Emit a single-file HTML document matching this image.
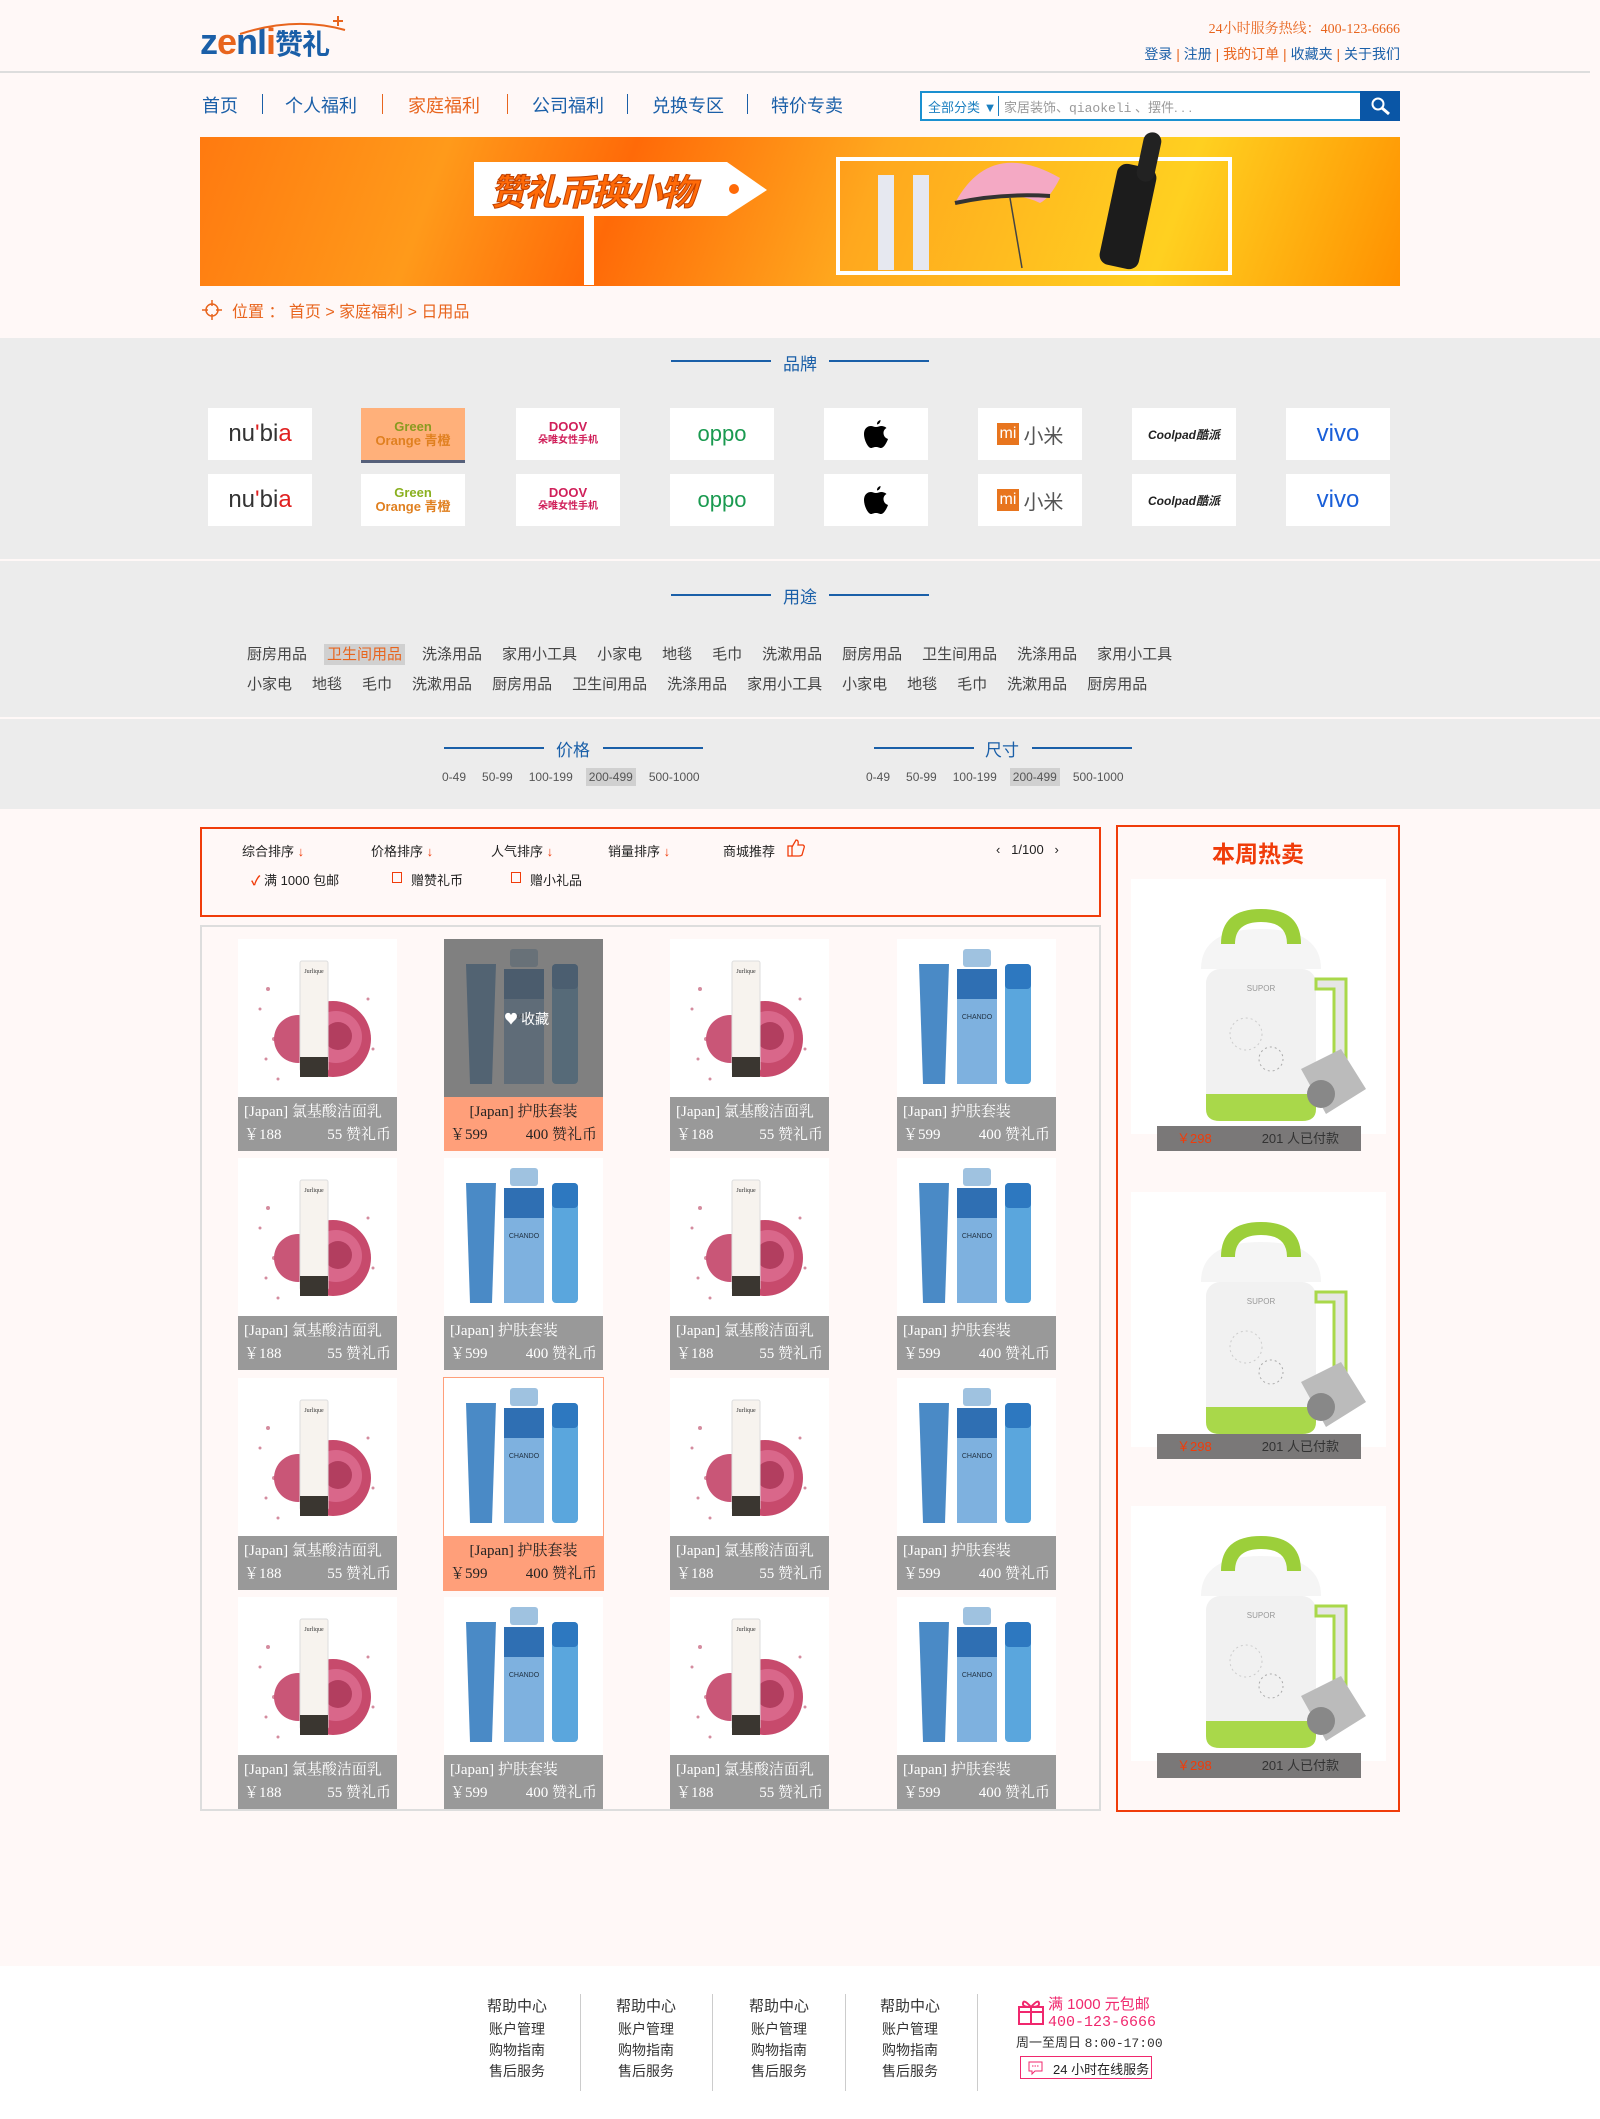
<!DOCTYPE html>
<html><head><meta charset="utf-8">
<style>
*{margin:0;padding:0;box-sizing:border-box}
body{width:1600px;height:2119px;background:#fff8f7;font-family:"Liberation Sans","Noto Sans CJK SC",sans-serif;position:relative;overflow:hidden;color:#333}
.a{position:absolute}
.nav span{position:absolute;top:92px;font-size:18px;color:#1a5fa8}
.sep{position:absolute;top:94px;width:1px;height:20px}
.sec{position:absolute;left:0;width:1600px;background:#ececec}
.ttl{position:absolute;font-size:17px;color:#1a5fa8;text-align:center;width:60px}
.ln{position:absolute;height:2px;background:#1a5fa8;width:100px}
.logo{position:absolute;width:104px;height:52px;background:#fff;display:flex;align-items:center;justify-content:center;font-weight:bold}
.use{position:absolute;font-size:15px;color:#444;white-space:nowrap}
.use i{font-style:normal;margin-right:20px}
.pr{position:absolute;font-size:12px;color:#555;white-space:nowrap}
.pr i{font-style:normal;margin:0 5px;padding:2px 3px}
.card{position:absolute;width:159px;height:212px;background:#fff}
.card svg{position:absolute;left:0;top:0}
.cap{position:absolute;left:0;top:158px;width:159px;height:54px;background:#999;color:#fff;font-family:"Liberation Serif","Noto Serif CJK SC",serif;font-size:15px;padding:4px 6px;line-height:23px}
.cap b{font-weight:normal;display:flex;justify-content:space-between}
.hot .cap{background:#ff9f7a;color:#222;text-align:center}
.side{position:absolute;left:1131px;width:255px;height:255px;background:#fff}
.bar{position:absolute;left:1157px;width:204px;height:25px;background:#7a7878;font-size:13px;color:#333;line-height:25px}
.fc{position:absolute;top:1996px;width:90px;text-align:center;font-size:14px;color:#333;line-height:21px}
.fc div:first-child{font-size:15px;margin-bottom:2px}
.fd{position:absolute;top:1994px;width:1px;height:97px;background:#ccc}
</style></head><body>
<svg width="0" height="0" style="position:absolute">
<defs>
<symbol id="rose" viewBox="0 0 159 158">
<rect width="159" height="158" fill="#fff"/>
<g fill="#b8405f" opacity=".6"><circle cx="30" cy="50" r="2"/><circle cx="22" cy="70" r="1.5"/><circle cx="36" cy="100" r="2"/><circle cx="28" cy="120" r="1.5"/><circle cx="130" cy="60" r="1.5"/><circle cx="135" cy="110" r="1.5"/><circle cx="40" cy="140" r="1.5"/></g>
<circle cx="95" cy="100" r="38" fill="#c74a6c"/><circle cx="98" cy="98" r="26" fill="#d9678a"/><circle cx="100" cy="97" r="14" fill="#b23e5f"/><circle cx="60" cy="100" r="24" fill="#c95677"/>
<rect x="62" y="22" width="28" height="110" rx="2" fill="#f7f3ee" stroke="#ddd"/><rect x="62" y="118" width="28" height="20" fill="#3a3630"/>
<text x="76" y="34" font-size="6" text-anchor="middle" fill="#333" font-family="Liberation Serif">Jurlique</text>
</symbol>
<symbol id="blue" viewBox="0 0 159 158">
<rect width="159" height="158" fill="#fff"/>
<path d="M22 25 h30 l-4 120 h-22z" fill="#4a8ac6"/>
<rect x="66" y="10" width="28" height="18" rx="3" fill="#9fc2e0"/>
<path d="M60 30 h40 v115 h-40z" fill="#7eb1df"/><rect x="60" y="30" width="40" height="30" fill="#2f6fb3"/>
<rect x="108" y="25" width="26" height="120" rx="4" fill="#5aa6dd"/><rect x="108" y="25" width="26" height="25" rx="4" fill="#2d78c0"/>
<text x="80" y="80" font-size="7" text-anchor="middle" fill="#234">CHANDO</text>
</symbol>
<symbol id="supor" viewBox="0 0 255 255">
<rect width="255" height="255" fill="#fff"/>
<rect x="75" y="90" width="110" height="150" rx="14" fill="#f1f1f1"/>
<path d="M75 215 h110 v15 q0 12 -14 12 h-82 q-14 0 -14 -12z" fill="#a9d84a"/>
<path d="M70 90 q0 -40 60 -40 q60 0 60 40z" fill="#f5f5f5"/>
<path d="M90 65 q0 -35 40 -35 q40 0 40 35 h-14 q0 -22 -26 -22 q-26 0 -26 22z" fill="#9ccf3a"/>
<path d="M185 100 h30 v110 h-20 v-10 h8 v-90 h-18z" fill="#e6e6e6" stroke="#a9d84a" stroke-width="3"/>
<path d="M170 190 l40 -20 l25 40 l-40 25z" fill="#bbb"/><circle cx="190" cy="215" r="14" fill="#888"/>
<text x="130" y="112" font-size="8" text-anchor="middle" fill="#999" font-family="Liberation Sans">SUPOR</text>
<circle cx="115" cy="155" r="16" fill="none" stroke="#ccc" stroke-dasharray="2 3"/><circle cx="140" cy="180" r="12" fill="none" stroke="#aaa" stroke-dasharray="2 3"/>
</symbol>
<symbol id="apple" viewBox="0 0 24 28">
<path d="M16.5 0 C16.7 2 15.2 4.2 13 4.5 C12.7 2.5 14.3 0.4 16.5 0z"/>
<path d="M12 7 C10 7 8.5 6 7 6 C3 6 0 9 0 14 C0 20 4 28 7 28 C8.5 28 9.5 27 12 27 C14.5 27 15.3 28 17 28 C20 28 23 22 24 19 C21 18 19.5 15.5 19.5 13 C19.5 10.5 21 8.8 22.5 8 C21 6.5 19 6 17.5 6 C15.5 6 14 7 12 7z"/>
</symbol>
</defs></svg>

<!-- header -->
<div class="a" style="left:200px;top:22px;font-size:36px;font-weight:bold;letter-spacing:-1px;line-height:40px"><span style="color:#1a5fa8">z</span><span style="color:#e8651e">e</span><span style="color:#1a5fa8">nl</span><span style="color:#e8651e">i</span><span style="color:#1a5fa8;font-size:28px">赞礼</span></div>
<svg class="a" style="left:235px;top:16px" width="120" height="20"><path d="M5 18 Q60 0 110 14" stroke="#e8651e" stroke-width="2" fill="none"/><path d="M103 0 v10 M98 5 h10" stroke="#e8651e" stroke-width="2"/></svg>
<div class="a" style="left:1150px;top:18px;width:250px;text-align:right;font-size:14px;color:#e8651e;font-family:'Liberation Serif','Noto Serif CJK SC',serif">24小时服务热线：400-123-6666</div>
<div class="a" style="left:1050px;top:44px;width:350px;text-align:right;font-size:14px;color:#1a5fa8">登录 <span style="color:#e8651e">|</span> 注册 <span style="color:#e8651e">|</span> <span style="color:#e8651e">我的订单</span> <span style="color:#e8651e">|</span> 收藏夹 <span style="color:#e8651e">|</span> 关于我们</div>
<div class="a" style="left:0;top:71px;width:1590px;height:2px;background:#ddd"></div>

<div class="nav">
<span style="left:202px">首页</span><div class="sep" style="left:262px;background:#1a5fa8"></div>
<span style="left:285px">个人福利</span><div class="sep" style="left:382px;background:#e8651e"></div>
<span style="left:408px;color:#e8651e">家庭福利</span><div class="sep" style="left:507px;background:#e8651e"></div>
<span style="left:532px">公司福利</span><div class="sep" style="left:627px;background:#1a5fa8"></div>
<span style="left:652px">兑换专区</span><div class="sep" style="left:747px;background:#1a5fa8"></div>
<span style="left:771px">特价专卖</span>
</div>
<div class="a" style="left:920px;top:91px;width:480px;height:30px;border:2px solid #1a90d0;background:#fff"></div>
<div class="a" style="left:928px;top:97px;font-size:13px;color:#1a7fc0">全部分类 ▼</div>
<div class="a" style="left:998px;top:96px;width:1px;height:20px;background:#1a7fc0"></div>
<div class="a" style="left:1004px;top:97px;font-size:13px;color:#999">家居装饰、<span style="font-family:'Liberation Mono'">qiaokeli</span> 、摆件. . .</div>
<div class="a" style="left:1360px;top:91px;width:40px;height:30px;background:#0a56a6"></div>
<svg class="a" style="left:1370px;top:96px" width="22" height="20"><circle cx="8" cy="8" r="5.5" stroke="#fff" stroke-width="2" fill="none"/><path d="M12 12 l7 6" stroke="#fff" stroke-width="3"/></svg>

<!-- banner -->
<div class="a" style="left:200px;top:137px;width:1200px;height:149px;background:linear-gradient(110deg,#ff7a10 0%,#ff9a1a 20%,#ff6a08 35%,#ffa81e 55%,#ffd020 80%,#ff9000 100%)"></div>
<div class="a" style="left:584px;top:210px;width:10px;height:75px;background:#fff"></div>
<svg class="a" style="left:472px;top:160px" width="300" height="58"><path d="M2 2 H255 L295 30 L255 56 H2z" fill="#fff"/><circle cx="262" cy="29" r="5" fill="#ff6a08"/></svg>
<div class="a" style="left:490px;top:164px;font-size:36px;font-weight:bold;color:#ff6a08;font-style:italic;letter-spacing:-2px;-webkit-text-stroke:1px #c04000">赞礼币换小物</div>
<div class="a" style="left:836px;top:157px;width:396px;height:118px;border:4px solid #fff"></div>
<div class="a" style="left:878px;top:175px;width:16px;height:95px;background:#e6e8f0"></div>
<div class="a" style="left:913px;top:175px;width:16px;height:95px;background:#e6e8f0"></div>
<svg class="a" style="left:950px;top:138px" width="120" height="140"><path d="M5 65 Q40 0 110 40 Q100 60 90 65 Q60 50 5 65z" fill="#f4a9c4"/><path d="M5 65 Q50 55 100 58" stroke="#333" stroke-width="4" fill="none"/><path d="M60 60 L72 130" stroke="#444" stroke-width="1.5"/></svg>
<div class="a" style="left:1108px;top:165px;width:40px;height:103px;background:#1c1c1c;border-radius:10px;transform:rotate(12deg)"></div>
<div class="a" style="left:1140px;top:132px;width:18px;height:50px;background:#222;border-radius:9px;transform:rotate(12deg)"></div>

<!-- breadcrumb -->
<svg class="a" style="left:202px;top:299px" width="20" height="22"><circle cx="10" cy="11" r="6" stroke="#e8651e" stroke-width="1.5" fill="none"/><path d="M10 1v6M10 15v6M0 11h6M14 11h6" stroke="#e8651e" stroke-width="1.5"/></svg>
<div class="a" style="left:232px;top:298px;font-size:16px;color:#e8651e">位置 ： 首页 &gt; 家庭福利 &gt; 日用品</div>

<!-- brand -->
<div class="sec" style="top:338px;height:221px"></div>
<div class="ln" style="left:671px;top:360px"></div><div class="ttl" style="left:770px;top:350px">品牌</div><div class="ln" style="left:829px;top:360px"></div>
<div class="logo" style="left:208px;top:408px;color:#333;font-size:24px;font-weight:normal">nu<span style="color:#e02020">'</span>bi<span style="color:#e02020">a</span></div>
<div class="logo" style="left:361px;top:408px;background:#ffb07a;box-shadow:0 3px 0 #56607a;color:#8a9a20;font-size:13px;line-height:14px;flex-direction:column">Green<br><span style="color:#e08020">Orange 青橙</span></div>
<div class="logo" style="left:516px;top:408px;color:#d0205a;font-size:13px;flex-direction:column;line-height:14px">DOOV<span style="font-size:10px">朵唯女性手机</span></div>
<div class="logo" style="left:670px;top:408px;color:#1a9a50;font-size:22px;font-weight:normal">oppo</div>
<div class="logo" style="left:824px;top:408px"><svg width="24" height="28"><use href="#apple"/></svg></div>
<div class="logo" style="left:978px;top:408px;color:#555;font-size:20px;font-weight:normal"><span style="background:#e8751e;color:#fff;font-size:16px;padding:2px 3px;margin-right:4px">mi</span>小米</div>
<div class="logo" style="left:1132px;top:408px;font-size:12px;font-style:italic;color:#222">Coolpad酷派</div>
<div class="logo" style="left:1286px;top:408px;color:#1a5fd8;font-size:24px;font-weight:normal">vivo</div>
<div class="logo" style="left:208px;top:474px;color:#333;font-size:24px;font-weight:normal">nu<span style="color:#e02020">'</span>bi<span style="color:#e02020">a</span></div>
<div class="logo" style="left:361px;top:474px;color:#8ab020;font-size:13px;line-height:14px;flex-direction:column">Green<br><span style="color:#e08020">Orange 青橙</span></div>
<div class="logo" style="left:516px;top:474px;color:#d0205a;font-size:13px;flex-direction:column;line-height:14px">DOOV<span style="font-size:10px">朵唯女性手机</span></div>
<div class="logo" style="left:670px;top:474px;color:#1a9a50;font-size:22px;font-weight:normal">oppo</div>
<div class="logo" style="left:824px;top:474px"><svg width="24" height="28"><use href="#apple"/></svg></div>
<div class="logo" style="left:978px;top:474px;color:#555;font-size:20px;font-weight:normal"><span style="background:#e8751e;color:#fff;font-size:16px;padding:2px 3px;margin-right:4px">mi</span>小米</div>
<div class="logo" style="left:1132px;top:474px;font-size:12px;font-style:italic;color:#222">Coolpad酷派</div>
<div class="logo" style="left:1286px;top:474px;color:#1a5fd8;font-size:24px;font-weight:normal">vivo</div>

<!-- usage -->
<div class="sec" style="top:561px;height:156px"></div>
<div class="ln" style="left:671px;top:594px"></div><div class="ttl" style="left:770px;top:583px">用途</div><div class="ln" style="left:829px;top:594px"></div>
<div class="use" style="left:247px;top:643px"><i>厨房用品</i><i style="background:#d0d0d0;color:#e8651e;padding:2px 3px;margin-left:-3px;margin-right:17px">卫生间用品</i><i>洗涤用品</i><i>家用小工具</i><i>小家电</i><i>地毯</i><i>毛巾</i><i>洗漱用品</i><i>厨房用品</i><i>卫生间用品</i><i>洗涤用品</i><i>家用小工具</i></div>
<div class="use" style="left:247px;top:673px"><i>小家电</i><i>地毯</i><i>毛巾</i><i>洗漱用品</i><i>厨房用品</i><i>卫生间用品</i><i>洗涤用品</i><i>家用小工具</i><i>小家电</i><i>地毯</i><i>毛巾</i><i>洗漱用品</i><i>厨房用品</i></div>

<!-- price -->
<div class="sec" style="top:719px;height:90px"></div>
<div class="ln" style="left:444px;top:747px"></div><div class="ttl" style="left:543px;top:736px">价格</div><div class="ln" style="left:603px;top:747px"></div>
<div class="ln" style="left:874px;top:747px"></div><div class="ttl" style="left:972px;top:736px">尺寸</div><div class="ln" style="left:1032px;top:747px"></div>
<div class="pr" style="left:434px;top:770px"><i>0-49</i><i>50-99</i><i>100-199</i><i style="background:#d0d0d0">200-499</i><i>500-1000</i></div>
<div class="pr" style="left:858px;top:770px"><i>0-49</i><i>50-99</i><i>100-199</i><i style="background:#d0d0d0">200-499</i><i>500-1000</i></div>

<!-- filter -->
<div class="a" style="left:200px;top:827px;width:901px;height:90px;border:2px solid #f03c0a"></div>
<div class="a" style="left:242px;top:841px;font-size:13px;color:#222;white-space:nowrap">综合排序 <span style="color:#f03c0a">↓</span></div>
<div class="a" style="left:371px;top:841px;font-size:13px;color:#222">价格排序 <span style="color:#f03c0a">↓</span></div>
<div class="a" style="left:491px;top:841px;font-size:13px;color:#222">人气排序 <span style="color:#f03c0a">↓</span></div>
<div class="a" style="left:608px;top:841px;font-size:13px;color:#222">销量排序 <span style="color:#f03c0a">↓</span></div>
<div class="a" style="left:723px;top:841px;font-size:13px;color:#222">商城推荐</div>
<svg class="a" style="left:786px;top:838px" width="20" height="20"><path d="M2 8h4v10H2z M6 9 L10 2 Q13 2 12 7 H17 Q19 8 18 10 L16 17 Q15 18 13 18 H6" fill="none" stroke="#f03c0a" stroke-width="1.3"/></svg>
<div class="a" style="left:996px;top:842px;font-size:13px;color:#222">‹ &nbsp; 1/100 &nbsp; ›</div>
<div class="a" style="left:251px;top:870px;font-size:13px;color:#222"><span style="color:#f03c0a;font-weight:bold">✓</span> 满 1000 包邮</div>
<div class="a" style="left:392px;top:872px;width:10px;height:11px;border:1px solid #f03c0a"></div><div class="a" style="left:411px;top:870px;font-size:13px;color:#222">赠赞礼币</div>
<div class="a" style="left:511px;top:872px;width:10px;height:11px;border:1px solid #f03c0a"></div><div class="a" style="left:530px;top:870px;font-size:13px;color:#222">赠小礼品</div>

<!-- products -->
<div class="a" style="left:200px;top:925px;width:901px;height:886px;border:2px solid #ddd"></div>

<div class="card" style="left:238px;top:939px"><svg width="159" height="158"><use href="#rose"/></svg><div class="cap">[Japan] 氯基酸洁面乳<b><span>￥188</span><span>55 赞礼币</span></b></div></div>
<div class="card hot" style="left:444px;top:939px"><svg width="159" height="158"><use href="#blue"/><rect width="159" height="158" fill="#555" opacity=".75"/><text x="60" y="85" fill="#fff" font-size="14" font-family="Noto Sans CJK SC">♥ 收藏</text></svg><div class="cap">[Japan] 护肤套装<b><span>￥599</span><span>400 赞礼币</span></b></div></div>
<div class="card" style="left:670px;top:939px"><svg width="159" height="158"><use href="#rose"/></svg><div class="cap">[Japan] 氯基酸洁面乳<b><span>￥188</span><span>55 赞礼币</span></b></div></div>
<div class="card" style="left:897px;top:939px"><svg width="159" height="158"><use href="#blue"/></svg><div class="cap">[Japan] 护肤套装<b><span>￥599</span><span>400 赞礼币</span></b></div></div>

<div class="card" style="left:238px;top:1158px"><svg width="159" height="158"><use href="#rose"/></svg><div class="cap">[Japan] 氯基酸洁面乳<b><span>￥188</span><span>55 赞礼币</span></b></div></div>
<div class="card" style="left:444px;top:1158px"><svg width="159" height="158"><use href="#blue"/></svg><div class="cap">[Japan] 护肤套装<b><span>￥599</span><span>400 赞礼币</span></b></div></div>
<div class="card" style="left:670px;top:1158px"><svg width="159" height="158"><use href="#rose"/></svg><div class="cap">[Japan] 氯基酸洁面乳<b><span>￥188</span><span>55 赞礼币</span></b></div></div>
<div class="card" style="left:897px;top:1158px"><svg width="159" height="158"><use href="#blue"/></svg><div class="cap">[Japan] 护肤套装<b><span>￥599</span><span>400 赞礼币</span></b></div></div>

<div class="card" style="left:238px;top:1378px"><svg width="159" height="158"><use href="#rose"/></svg><div class="cap">[Japan] 氯基酸洁面乳<b><span>￥188</span><span>55 赞礼币</span></b></div></div>
<div class="card hot" style="left:444px;top:1378px;outline:1px solid #ff9f7a"><svg width="159" height="158"><use href="#blue"/></svg><div class="cap">[Japan] 护肤套装<b><span>￥599</span><span>400 赞礼币</span></b></div></div>
<div class="card" style="left:670px;top:1378px"><svg width="159" height="158"><use href="#rose"/></svg><div class="cap">[Japan] 氯基酸洁面乳<b><span>￥188</span><span>55 赞礼币</span></b></div></div>
<div class="card" style="left:897px;top:1378px"><svg width="159" height="158"><use href="#blue"/></svg><div class="cap">[Japan] 护肤套装<b><span>￥599</span><span>400 赞礼币</span></b></div></div>

<div class="card" style="left:238px;top:1597px"><svg width="159" height="158"><use href="#rose"/></svg><div class="cap">[Japan] 氯基酸洁面乳<b><span>￥188</span><span>55 赞礼币</span></b></div></div>
<div class="card" style="left:444px;top:1597px"><svg width="159" height="158"><use href="#blue"/></svg><div class="cap">[Japan] 护肤套装<b><span>￥599</span><span>400 赞礼币</span></b></div></div>
<div class="card" style="left:670px;top:1597px"><svg width="159" height="158"><use href="#rose"/></svg><div class="cap">[Japan] 氯基酸洁面乳<b><span>￥188</span><span>55 赞礼币</span></b></div></div>
<div class="card" style="left:897px;top:1597px"><svg width="159" height="158"><use href="#blue"/></svg><div class="cap">[Japan] 护肤套装<b><span>￥599</span><span>400 赞礼币</span></b></div></div>

<!-- sidebar -->
<div class="a" style="left:1116px;top:825px;width:284px;height:987px;border:2px solid #f03c0a"></div>
<div class="a" style="left:1116px;top:835px;width:284px;text-align:center;font-size:23px;font-weight:bold;color:#f03c0a">本周热卖</div>
<svg class="side" style="top:879px" width="255" height="255"><use href="#supor"/></svg>
<div class="bar" style="top:1126px"><span style="color:#f03c0a;margin-left:20px">￥298</span><span style="margin-left:50px">201 人已付款</span></div>
<svg class="side" style="top:1192px" width="255" height="255"><use href="#supor"/></svg>
<div class="bar" style="top:1434px"><span style="color:#f03c0a;margin-left:20px">￥298</span><span style="margin-left:50px">201 人已付款</span></div>
<svg class="side" style="top:1506px" width="255" height="255"><use href="#supor"/></svg>
<div class="bar" style="top:1753px"><span style="color:#f03c0a;margin-left:20px">￥298</span><span style="margin-left:50px">201 人已付款</span></div>

<!-- footer -->
<div class="a" style="left:0;top:1966px;width:1600px;height:153px;background:#fff"></div>
<div class="fc" style="left:472px"><div>帮助中心</div><div>账户管理</div><div>购物指南</div><div>售后服务</div></div>
<div class="fd" style="left:580px"></div>
<div class="fc" style="left:601px"><div>帮助中心</div><div>账户管理</div><div>购物指南</div><div>售后服务</div></div>
<div class="fd" style="left:712px"></div>
<div class="fc" style="left:734px"><div>帮助中心</div><div>账户管理</div><div>购物指南</div><div>售后服务</div></div>
<div class="fd" style="left:845px"></div>
<div class="fc" style="left:865px"><div>帮助中心</div><div>账户管理</div><div>购物指南</div><div>售后服务</div></div>
<div class="fd" style="left:977px"></div>
<svg class="a" style="left:1017px;top:1998px" width="28" height="28"><rect x="2" y="9" width="24" height="17" fill="none" stroke="#f0286e" stroke-width="2"/><path d="M2 14h24M14 9v17M14 9 Q6 0 6 6 Q6 9 14 9 Q22 0 22 6 Q22 9 14 9" fill="none" stroke="#f0286e" stroke-width="2"/></svg>
<div class="a" style="left:1048px;top:1996px;font-size:15px;color:#f0286e;line-height:17px">满 1000 元包邮<br><span style="font-family:'Liberation Mono'">400-123-6666</span></div>
<div class="a" style="left:1016px;top:2032px;font-size:13px;color:#333">周一至周日 <span style="font-family:'Liberation Mono'">8:00-17:00</span></div>
<div class="a" style="left:1020px;top:2056px;width:132px;height:23px;border:1.5px solid #f0286e"></div>
<svg class="a" style="left:1028px;top:2061px" width="16" height="15"><path d="M1 1h13v9H7l-3 3v-3H1z" fill="none" stroke="#f0286e"/><path d="M4 5h7" stroke="#f0286e" stroke-dasharray="1.5 1"/></svg>
<div class="a" style="left:1053px;top:2059px;font-size:13px;color:#222">24 小时在线服务</div>
</body></html>
